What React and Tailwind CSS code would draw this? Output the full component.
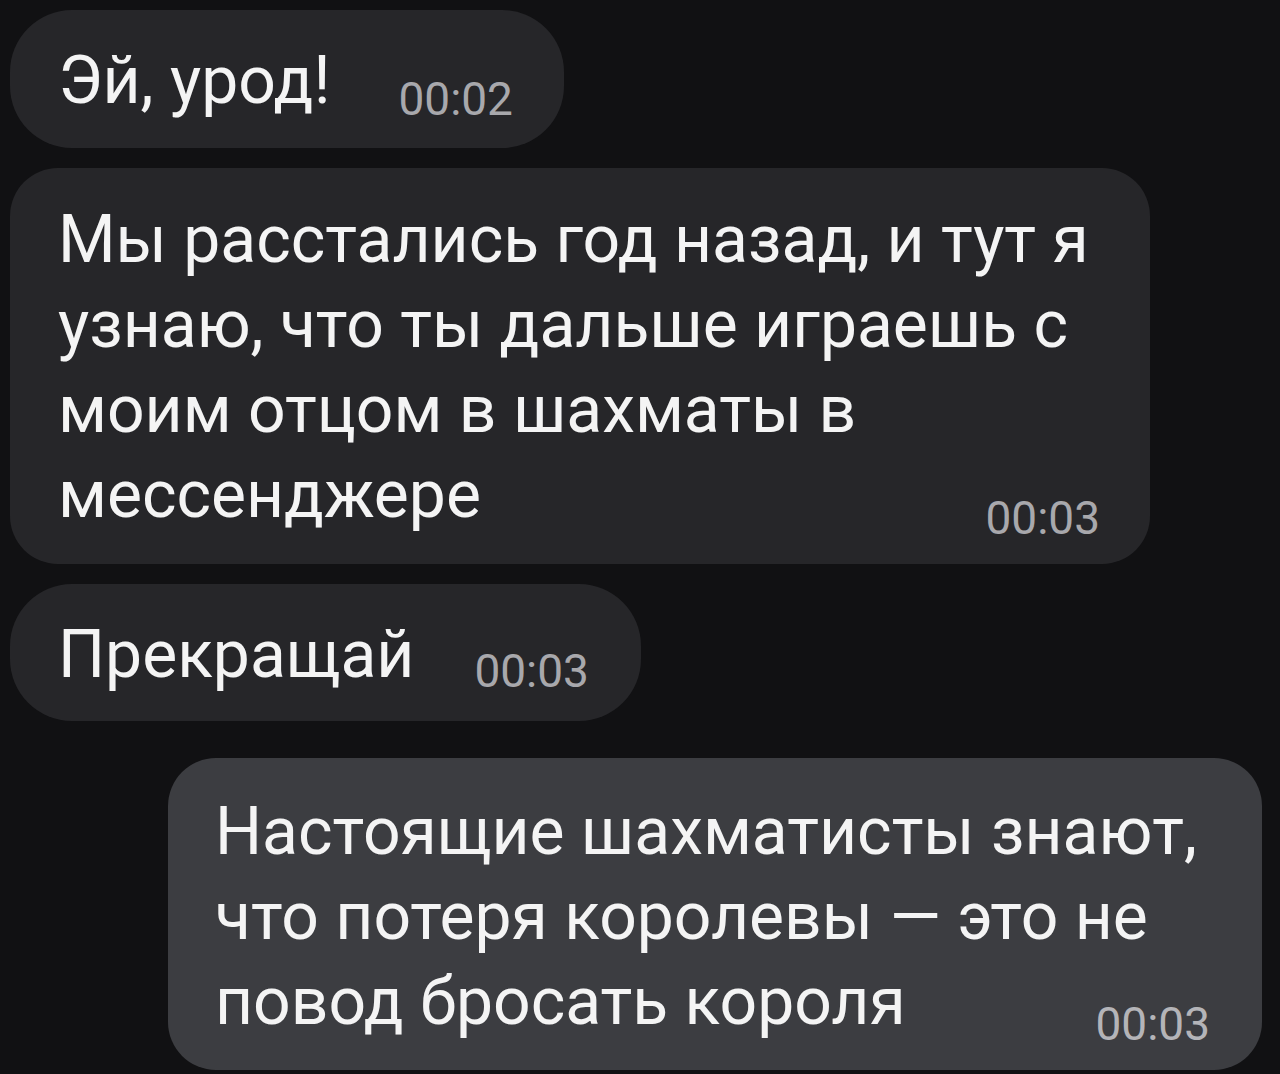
const messages = [
  {
    id: 1,
    text: 'Эй, урод!',
    time: '00:02',
    box: 'w-fit mt-[10px] ml-[10px] rounded-[62px] pt-[28px] pb-[25px] pl-[48px] pr-[51px] bg-[#262629]',
    stamp: 'ml-[68px] mt-[38px]',
  },
  {
    id: 2,
    text: 'Мы расстались год назад, и тут я узнаю, что ты дальше играешь с моим отцом в шахматы в мессенджере',
    time: '00:03',
    box: 'mt-[20px] ml-[10px] w-[1140px] rounded-[48px] pt-[29px] pb-[23px] pl-[48px] pr-[50px] bg-[#262629]',
    stamp: 'ml-[40px] mt-[43px]',
  },
  {
    id: 3,
    text: 'Прекращай',
    time: '00:03',
    box: 'w-fit mt-[20px] ml-[10px] rounded-[62px] pt-[28px] pb-[24px] pl-[48px] pr-[52px] bg-[#262629]',
    stamp: 'ml-[60px] mt-[36px]',
  },
  {
    id: 4,
    text: 'Настоящие шахматисты знают, что потеря королевы — это не повод бросать короля',
    time: '00:03',
    box: 'mt-[37px] self-end mr-[18px] w-[1094px] rounded-[48px] pt-[31px] pb-[23px] pl-[47px] pr-[52px] bg-[#3c3d41]',
    stamp: 'ml-[40px] mt-[42px] text-[#b4b4b8]',
  },
]

function Bubble({ m }) {
  return (
    <div className={`flow-root max-w-[1140px] text-[66px] leading-[85px] text-[#f4f4f4] ${m.box}`}>
      {m.text}
      <span className={`float-right text-[46px] leading-none text-[#a8a8ac] ${m.stamp}`}>{m.time}</span>
    </div>
  )
}

export default function App() {
  return (
    <div className="w-[1280px] h-[1074px] overflow-hidden bg-[#111113] flex flex-col items-start font-['Roboto',_'Noto_Sans',_sans-serif]">
      {messages.map((m) => (
        <Bubble key={m.id} m={m} />
      ))}
    </div>
  )
}
